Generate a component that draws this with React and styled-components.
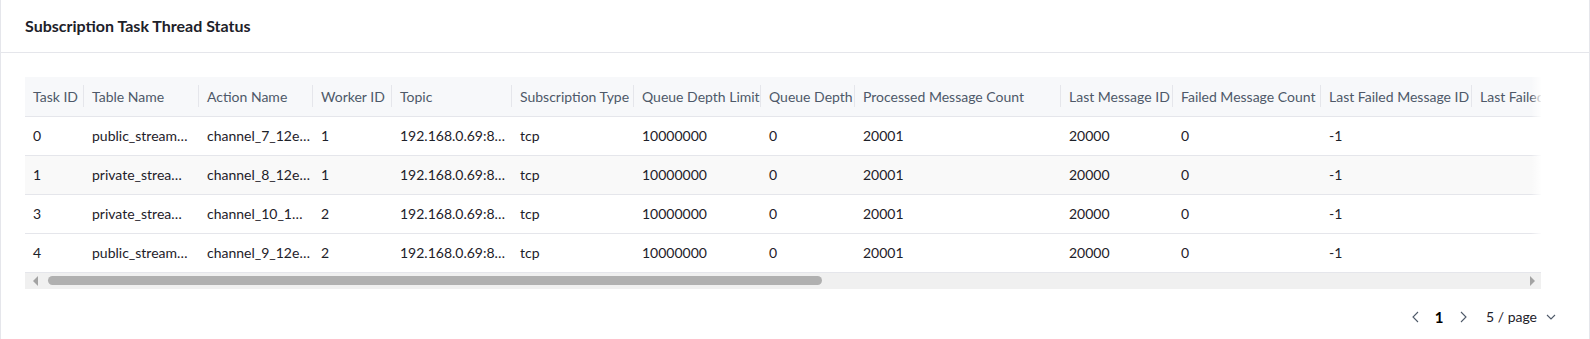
import React from "react";
import styled, { createGlobalStyle } from "styled-components";

const Global = createGlobalStyle`
  html, body { margin: 0; padding: 0; background: #fff; }
  body { font-family: Lato, "Liberation Sans", Arial, sans-serif; -webkit-font-smoothing: antialiased; }
  * { box-sizing: border-box; }
`;

const Card = styled.section`
  width: 1590px;
  height: 339px;
  border-left: 1px solid #e5e6eb;
  border-right: 1px solid #e5e6eb;
  background: #fff;
  overflow: hidden;
`;

const CardHeader = styled.header`
  height: 53px;
  border-bottom: 1px solid #e5e6eb;
  padding-left: 24px;
  display: flex;
  align-items: center;
`;

const Title = styled.h2`
  margin: 0;
  font-size: 16px;
  font-weight: 700;
  color: #1d2129;
  line-height: 24px;
`;

const CardBody = styled.div`
  padding: 24px 0 0 24px;
`;

const TableWrap = styled.div`
  width: 1516px;
  overflow: hidden;
  position: relative;
  &::after {
    content: "";
    position: absolute;
    top: 0;
    right: 0;
    width: 10px;
    height: 194px;
    background: linear-gradient(to right, rgba(255,255,255,0), rgba(255,255,255,0.9));
    pointer-events: none;
  }
`;

const Table = styled.table`
  table-layout: fixed;
  border-collapse: collapse;
  border-spacing: 0;
  width: 1597px;
  font-size: 14px;
`;

const Th = styled.th`
  position: relative;
  height: 39px;
  padding: 0 8px;
  text-align: left;
  font-weight: 400;
  color: #4e5969;
  background: #f7f8fa;
  border-bottom: 1px solid #e5e6eb;
  white-space: nowrap;
  overflow: hidden;
  text-overflow: clip;
  &::after {
    content: "";
    position: absolute;
    right: 0;
    top: 8px;
    width: 1px;
    height: 22px;
    background: #e5e6eb;
  }
`;

const Tr = styled.tr`
  background: ${(p) => (p.$hover ? "#f9f9f9" : "#fff")};
`;

const Td = styled.td`
  height: 39px;
  padding: 0 0 0 8px;
  color: #1d2129;
  border-bottom: 1px solid #e5e6eb;
  white-space: nowrap;
  overflow: hidden;
  text-overflow: clip;
`;

const ScrollTrack = styled.div`
  width: 1516px;
  height: 16px;
  background: #f0f0f0;
  display: flex;
  align-items: center;
  padding: 0 6px 0 8px;
`;

const ScrollArrow = styled.span`
  width: 0;
  height: 0;
  border-top: 5px solid transparent;
  border-bottom: 5px solid transparent;
  ${(p) =>
    p.$dir === "left"
      ? "border-right: 5px solid #a3a3a3;"
      : "border-left: 5px solid #a3a3a3;"}
`;

const ScrollBody = styled.div`
  flex: 1;
  display: flex;
  align-items: center;
  padding: 0 6px 0 10px;
`;

const ScrollThumb = styled.div`
  height: 9px;
  border-radius: 5px;
  background: #b0b0b0;
`;

const Pagination = styled.nav`
  display: flex;
  justify-content: flex-end;
  align-items: center;
  height: 32px;
  margin-top: 12px;
  padding-right: 33px;
  font-size: 14px;
  color: #1d2129;
`;

const PageItem = styled.span`
  width: 24px;
  height: 32px;
  display: flex;
  align-items: center;
  justify-content: center;
  font-weight: ${(p) => (p.$active ? 700 : 400)};
  font-size: ${(p) => (p.$active ? "15px" : "14px")};
  color: ${(p) => (p.$active ? "#000" : "#4e5969")};
`;

const SizeSelect = styled.span`
  margin-left: 11px;
  display: flex;
  align-items: center;
  gap: 9px;
  color: #1d2129;
`;

const Chevron = ({ dir }) => {
  const pts = {
    left: "6,1 1,6 6,11",
    right: "1,1 6,6 1,11",
    down: "1,1 5,5 9,1",
  }[dir];
  const w = dir === "down" ? 10 : 7;
  const h = dir === "down" ? 6 : 12;
  return (
    <svg width={w} height={h} viewBox={`0 0 ${w} ${h}`} fill="none">
      <polyline points={pts} stroke="#4e5969" strokeWidth="1.1" />
    </svg>
  );
};

const columns = [
  { title: "Task ID", w: 59 },
  { title: "Table Name", w: 115 },
  { title: "Action Name", w: 114 },
  { title: "Worker ID", w: 79 },
  { title: "Topic", w: 120 },
  { title: "Subscription Type", w: 122 },
  { title: "Queue Depth Limit", w: 127 },
  { title: "Queue Depth", w: 94 },
  { title: "Processed Message Count", w: 206 },
  { title: "Last Message ID", w: 112 },
  { title: "Failed Message Count", w: 148 },
  { title: "Last Failed Message ID", w: 151 },
  { title: "Last Failed Timestamp", w: 150 },
];

const rows = [
  ["0", "public_stream…", "channel_7_12e…", "1", "192.168.0.69:8…", "tcp", "10000000", "0", "20001", "20000", "0", "-1", ""],
  ["1", "private_strea…", "channel_8_12e…", "1", "192.168.0.69:8…", "tcp", "10000000", "0", "20001", "20000", "0", "-1", ""],
  ["3", "private_strea…", "channel_10_1…", "2", "192.168.0.69:8…", "tcp", "10000000", "0", "20001", "20000", "0", "-1", ""],
  ["4", "public_stream…", "channel_9_12e…", "2", "192.168.0.69:8…", "tcp", "10000000", "0", "20001", "20000", "0", "-1", ""],
];

export default function App() {
  return (
    <>
      <Global />
      <Card>
        <CardHeader>
          <Title>Subscription Task Thread Status</Title>
        </CardHeader>
        <CardBody>
          <TableWrap>
            <Table>
              <colgroup>
                {columns.map((c) => (
                  <col key={c.title} style={{ width: c.w }} />
                ))}
              </colgroup>
              <thead>
                <tr>
                  {columns.map((c) => (
                    <Th key={c.title}>{c.title}</Th>
                  ))}
                </tr>
              </thead>
              <tbody>
                {rows.map((r, i) => (
                  <Tr key={i} $hover={i === 1}>
                    {r.map((v, j) => (
                      <Td key={j}>{v}</Td>
                    ))}
                  </Tr>
                ))}
              </tbody>
            </Table>
          </TableWrap>
          <ScrollTrack>
            <ScrollArrow $dir="left" />
            <ScrollBody>
              <ScrollThumb style={{ width: 774 }} />
            </ScrollBody>
            <ScrollArrow $dir="right" />
          </ScrollTrack>
        </CardBody>
        <Pagination>
          <PageItem><Chevron dir="left" /></PageItem>
          <PageItem $active>1</PageItem>
          <PageItem><Chevron dir="right" /></PageItem>
          <SizeSelect>
            5 / page
            <Chevron dir="down" />
          </SizeSelect>
        </Pagination>
      </Card>
    </>
  );
}
